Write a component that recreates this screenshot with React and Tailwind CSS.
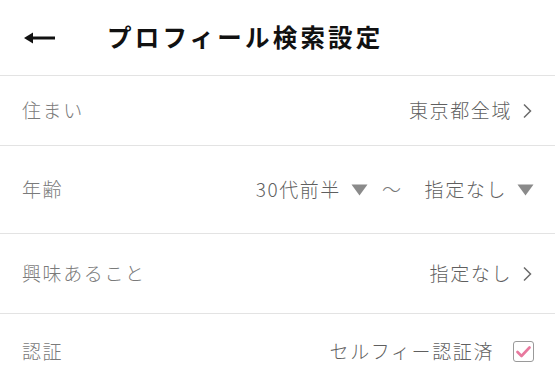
import React from 'react'

// Profile search settings screen: header + list of filter rows.

const FONT = { fontFamily: '"Noto Sans CJK JP", "Noto Sans", sans-serif' }

function Chevron() {
  return (
    <svg width="14" height="18" viewBox="0 0 14 18" className="ml-[8px]">
      <path d="M4 2.5 L10.5 9 L4 15.5" fill="none" stroke="#6b6b6b" strokeWidth="1.5" />
    </svg>
  )
}

function Caret() {
  return (
    <svg width="17" height="12" viewBox="0 0 17 12" className="ml-[10px]">
      <path d="M0.5 0.5 L16.5 0.5 L8.5 11.5 Z" fill="#8a8a8a" />
    </svg>
  )
}

function Row({ label, h, children }) {
  return (
    <div className={`flex items-center justify-between border-b border-[#e3e3e3] pl-[22px] pr-[21px] ${h}`}>
      <span className="text-[19px] font-light tracking-[1.6px] text-[#7a7a7a]">{label}</span>
      <div className="flex items-center text-[19px] font-light tracking-[1.6px] text-[#5f5f5f]">{children}</div>
    </div>
  )
}

export default function App() {
  return (
    <div className="h-[379px] w-[555px] overflow-hidden bg-white" style={FONT}>
      <div className="flex h-[76px] items-center border-b border-[#e3e3e3] pl-[24px]">
        <svg width="32" height="16" viewBox="0 0 32 16">
          <path d="M4 8 L31 8" stroke="#111" strokeWidth="3" />
          <path d="M0 8 L9 2.5 L9 13.5 Z" fill="#111" />
        </svg>
        <h1 className="ml-[51px] text-[24.5px] font-bold tracking-[3.2px] text-[#111]">プロフィール検索設定</h1>
      </div>

      <Row label="住まい" h="h-[70px]">
        東京都全域
        <Chevron />
      </Row>

      <Row label="年齢" h="h-[88px]">
        30代前半
        <Caret />
        <span className="ml-[14px] mr-[22px] text-[#777]">〜</span>
        指定なし
        <Caret />
      </Row>

      <Row label="興味あること" h="h-[80px]">
        指定なし
        <Chevron />
      </Row>

      <Row label="認証" h="h-[76px]">
        セルフィー認証済
        <span className="ml-[19px] flex h-[21px] w-[21px] items-center justify-center rounded-[3px] border-[1.5px] border-[#9a9a9a]">
          <svg width="15" height="12" viewBox="0 0 15 12">
            <path d="M1.5 6 L5.5 10 L13.5 1.5" fill="none" stroke="#e8799e" strokeWidth="2.6" strokeLinecap="round" strokeLinejoin="round" />
          </svg>
        </span>
      </Row>
    </div>
  )
}
